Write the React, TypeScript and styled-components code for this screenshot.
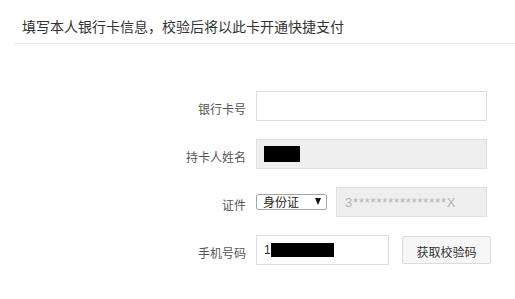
import React from "react";
import styled, { createGlobalStyle } from "styled-components";

const Global = createGlobalStyle`
  html, body { margin: 0; padding: 0; background: #fff; }
  body {
    font-family: "Noto Sans CJK SC", "Liberation Sans", sans-serif;
    color: #333;
    width: 515px;
    overflow: hidden;
  }
  * { box-sizing: border-box; }
`;

const Page = styled.div`
  padding-left: 14px;
  width: 515px;
  height: 299px;
`;

const Header = styled.div`
  height: 44px;
  padding: 17px 0 0 8px;
  border-bottom: 1px solid #ebebeb;
  font-size: 14px;
  line-height: 18px;
  color: #333;
`;

const Form = styled.div`
  display: grid;
  grid-template-columns: 232px 1fr;
  column-gap: 10px;
  row-gap: 18px;
  margin-top: 47px;
  grid-auto-rows: 30px;
`;

const Label = styled.label`
  text-align: right;
  font-size: 12px;
  line-height: 30px;
  padding-top: 3px;
  color: #555;
`;

const Controls = styled.div<{ $gap?: number }>`
  display: flex;
  align-items: center;
  gap: ${(p) => p.$gap ?? 0}px;
`;

const Field = styled.div<{ $w: number; $disabled?: boolean }>`
  width: ${(p) => p.$w}px;
  height: 30px;
  border: 1px solid ${(p) => (p.$disabled ? "#e0e0e0" : "#dedede")};
  background: ${(p) => (p.$disabled ? "#eeeeee" : "#fff")};
  display: flex;
  align-items: center;
  padding-left: 7px;
  font-family: "Liberation Sans", sans-serif;
  font-size: 12px;
  color: #333;
`;

const Masked = styled.span`
  color: #b4b4b4;
  font-size: 13px;
  letter-spacing: 0.8px;
  padding-left: 1px;
`;

const Redact = styled.span<{ $w: number; $h: number }>`
  display: inline-block;
  width: ${(p) => p.$w}px;
  height: ${(p) => p.$h}px;
  background: #000;
`;

const SelectBox = styled.div`
  position: relative;
  width: 71px;
  height: 16px;
  margin-top: -1px;
`;

const Select = styled.select`
  display: block;
  appearance: none;
  -webkit-appearance: none;
  width: 71px;
  height: 16px;
  margin: 0;
  border: 1px solid #a5a5a5;
  border-radius: 2px;
  background: #fff;
  padding: 0 0 0 6px;
  font-family: "Noto Sans CJK SC", sans-serif;
  font-size: 12px;
  line-height: 14px;
  color: #222;
  outline: none;
`;

const Arrow = styled.span`
  position: absolute;
  right: 6px;
  top: 4px;
  width: 0;
  height: 0;
  border-left: 3.5px solid transparent;
  border-right: 3.5px solid transparent;
  border-top: 7px solid #111;
  pointer-events: none;
`;

const Button = styled.button`
  width: 89px;
  height: 28px;
  margin: 0;
  border: 1px solid #dcdcdc;
  border-radius: 2px;
  background: #f6f6f6;
  font-family: "Noto Sans CJK SC", sans-serif;
  font-size: 12px;
  color: #333;
  padding: 2px 0 0;
`;

export default function App() {
  return (
    <Page>
      <Global />
      <Header>填写本人银行卡信息，校验后将以此卡开通快捷支付</Header>
      <Form>
        <Label>银行卡号</Label>
        <Controls>
          <Field $w={231} />
        </Controls>

        <Label>持卡人姓名</Label>
        <Controls>
          <Field $w={231} $disabled>
            <Redact $w={36} $h={16} />
          </Field>
        </Controls>

        <Label>证件</Label>
        <Controls $gap={9}>
          <SelectBox>
            <Select defaultValue="id">
              <option value="id">身份证</option>
            </Select>
            <Arrow />
          </SelectBox>
          <Field $w={151} $disabled>
            <Masked>3****************X</Masked>
          </Field>
        </Controls>

        <Label>手机号码</Label>
        <Controls $gap={13}>
          <Field $w={133}>
            <span>1</span>
            <Redact $w={63} $h={14} />
          </Field>
          <Button>获取校验码</Button>
        </Controls>
      </Form>
    </Page>
  );
}
